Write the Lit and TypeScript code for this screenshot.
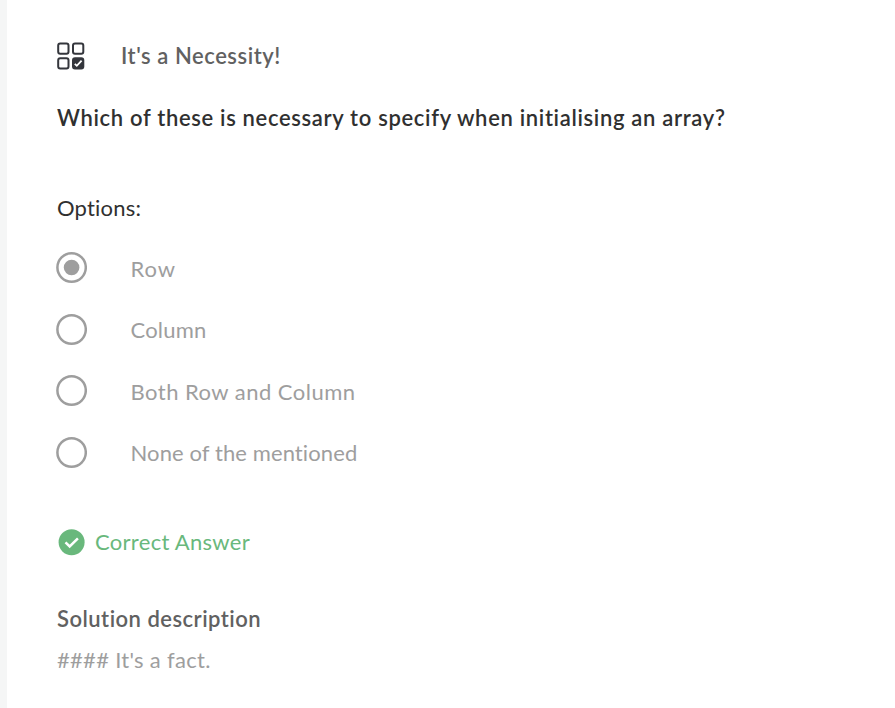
import { LitElement, html, svg, css } from "lit";
import { customElement, property } from "lit/decorators.js";
import { classMap } from "lit/directives/class-map.js";

@customElement("option-row")
class OptionRow extends LitElement {
  @property() label = "";
  @property() tone = "";
  @property({ type: Boolean }) selected = false;

  static styles = css`
    :host { display: flex; align-items: center; height: 61.5px; }
    .ring { width: 31px; height: 31px; margin-right: 43.5px; display: block; flex: none; }
    .label { font-size: 22px; line-height: 28px; color: #9e9e9e; white-space: nowrap; padding-top: 2px; }
    .row { letter-spacing: 0.9px; }
    .column { letter-spacing: 0.2px; }
    .both { letter-spacing: 0.48px; }
    .none { letter-spacing: 0.1px; }
  `;

  render() {
    return html`
      <svg class="ring" viewBox="0 0 31 31">
        <circle cx="15.6" cy="15.5" r="14.2" fill="none" stroke="#9e9e9e" stroke-width="2.5"/>
        ${this.selected ? svg`<circle cx="15.6" cy="15.5" r="7.8" fill="#9e9e9e"/>` : ""}
      </svg>
      <span class=${classMap({ label: true, [this.tone]: true })}>${this.label}</span>
    `;
  }
}

@customElement("app-root")
class AppRoot extends LitElement {
  static styles = css`
    :host { display: block; box-sizing: border-box; height: 708px; overflow: hidden; background: #fff; border-left: 7px solid #f5f6f6; padding: 38px 0 0 49px; font-family: Lato, "Liberation Sans", sans-serif; font-size: 22px; line-height: 28px; }
    .head { display: flex; align-items: center; height: 36px; }
    .grid { width: 30px; height: 30px; display: block; margin-right: 35px; }
    .title, .question, .options, .answer span, .solution, .fact { white-space: nowrap; letter-spacing: 0.3px; }
    .title { font-weight: 600; letter-spacing: 0.55px; color: #616161; }
    .question { font-weight: 600; letter-spacing: 0.67px; color: #303030; margin: 30px 0 0 1px; }
    .options { color: #303030; margin: 62px 0 0 1px; letter-spacing: 0.2px; }
    .list { margin-top: 15px; }
    .answer { display: flex; align-items: center; gap: 10px; height: 28px; margin: 45px 0 0 2px; color: #69b87c; }
    .check { width: 27px; height: 27px; display: block; }
    .solution { font-weight: 600; letter-spacing: 0.48px; color: #616161; margin: 49px 0 0 1px; }
    .fact { color: #9e9e9e; margin: 13px 0 0 1px; }
  `;

  private options = [
    { label: "Row", tone: "row" },
    { label: "Column", tone: "column" },
    { label: "Both Row and Column", tone: "both" },
    { label: "None of the mentioned", tone: "none" },
  ];

  render() {
    return html`
      <div class="head">
        <svg class="grid" viewBox="0 0 30 30" fill="none" stroke="#34363c" stroke-width="2">
          <rect x="2.2" y="2.6" width="10.3" height="10.1" rx="2"/>
          <rect x="17" y="2.6" width="10.3" height="10.1" rx="2"/>
          <rect x="2.2" y="17.3" width="10.3" height="10.1" rx="2"/>
          <rect x="17" y="17.3" width="10.3" height="10.1" rx="2" fill="#34363c"/>
          <path d="M18.8 22.8l2 2 4.8-5.2" stroke="#fff" stroke-width="1.8"/>
        </svg>
        <span class="title">It's a Necessity!</span>
      </div>
      <div class="question">Which of these is necessary to specify when initialising an array?</div>
      <div class="options">Options:</div>
      <div class="list">
        ${this.options.map((o, i) => html`<option-row .label=${o.label} .tone=${o.tone} .selected=${i === 0}></option-row>`)}
      </div>
      <div class="answer">
        <svg class="check" viewBox="0 0 27 27">
          <circle cx="13.6" cy="13.3" r="13" fill="#69b87c"/>
          <path d="M7.5 13.3l4.2 4.2 8.2-8.2" fill="none" stroke="#fff" stroke-width="2.5"/>
        </svg>
        <span>Correct Answer</span>
      </div>
      <div class="solution">Solution description</div>
      <div class="fact">#### It's a fact.</div>
    `;
  }
}
